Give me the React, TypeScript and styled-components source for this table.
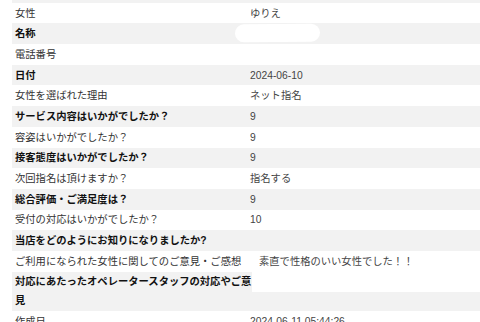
import React from 'react'
import styled, { createGlobalStyle } from 'styled-components'

const GlobalStyle = createGlobalStyle`
  html, body {
    margin: 0;
    padding: 0;
    background: #ffffff;
    overflow: hidden;
  }
  body {
    font-family: 'Liberation Sans', 'Noto Sans CJK JP', sans-serif;
  }
`

const Sheet = styled.div`
  width: 480px;
  height: 322px;
  overflow: hidden;
`

const List = styled.dl`
  margin: -18px 0 0 12px;
  padding: 0;
  display: flex;
  flex-direction: column;
  font-size: 10.3px;
  line-height: 19px;
`

const Row = styled.div<{ $shaded: boolean }>`
  display: flex;
  align-items: stretch;
  background: ${({ $shaded }) => ($shaded ? '#f2f2f2' : '#ffffff')};
`

const Label = styled.dt<{ $strong: boolean }>`
  margin: 0;
  box-sizing: border-box;
  flex: 0 0 auto;
  min-width: 235px;
  max-width: 240px;
  padding: 0.85px 0 0.85px 3px;
  font-weight: ${({ $strong }) => ($strong ? 700 : 400)};
  color: ${({ $strong }) => ($strong ? '#111111' : '#333333')};
`

const Value = styled.dd<{ $lit?: boolean; $gap?: number }>`
  margin: 0;
  flex: 1;
  min-height: 19px;
  padding: 0.85px 0 0.85px ${({ $gap }) => $gap ?? 3}px;
  color: #444444;
  ${({ $lit }) =>
    $lit &&
    `
    align-self: flex-start;
    background: #ffffff;
  `}
`

const Redaction = styled.span`
  display: inline-block;
  vertical-align: top;
  width: 85px;
  height: 18px;
  margin: 0 0 0 -15px;
  border-radius: 9px;
  background: #ffffff;
  transform: rotate(-0.6deg);
`

type Item = {
  label: string
  value?: React.ReactNode
  lit?: boolean
  gap?: number
}

const items: Item[] = [
  { label: '' },
  { label: '女性', value: 'ゆりえ' },
  { label: '名称', value: <Redaction /> },
  { label: '電話番号' },
  { label: '日付', value: '2024-06-10' },
  { label: '女性を選ばれた理由', value: 'ネット指名' },
  { label: 'サービス内容はいかがでしたか？', value: '9' },
  { label: '容姿はいかがでしたか？', value: '9' },
  { label: '接客態度はいかがでしたか？', value: '9' },
  { label: '次回指名は頂けますか？', value: '指名する' },
  { label: '総合評価・ご満足度は？', value: '9' },
  { label: '受付の対応はいかがでしたか？', value: '10' },
  { label: '当店をどのようにお知りになりましたか?' },
  {
    label: 'ご利用になられた女性に関してのご意見・ご感想',
    value: '素直で性格のいい女性でした！！',
    gap: 12,
  },
  { label: '対応にあたったオペレータースタッフの対応やご意見', lit: true },
  { label: '作成日', value: '2024-06-11 05:44:26' },
]

const App = () => {
  return (
    <Sheet>
      <GlobalStyle />
      <List>
        {items.map((item, i) => (
          <Row key={i} $shaded={i % 2 === 0}>
            <Label $strong={i % 2 === 0}>{item.label}</Label>
            <Value $lit={item.lit} $gap={item.gap}>
              {item.value}
            </Value>
          </Row>
        ))}
      </List>
    </Sheet>
  )
}

export default App
